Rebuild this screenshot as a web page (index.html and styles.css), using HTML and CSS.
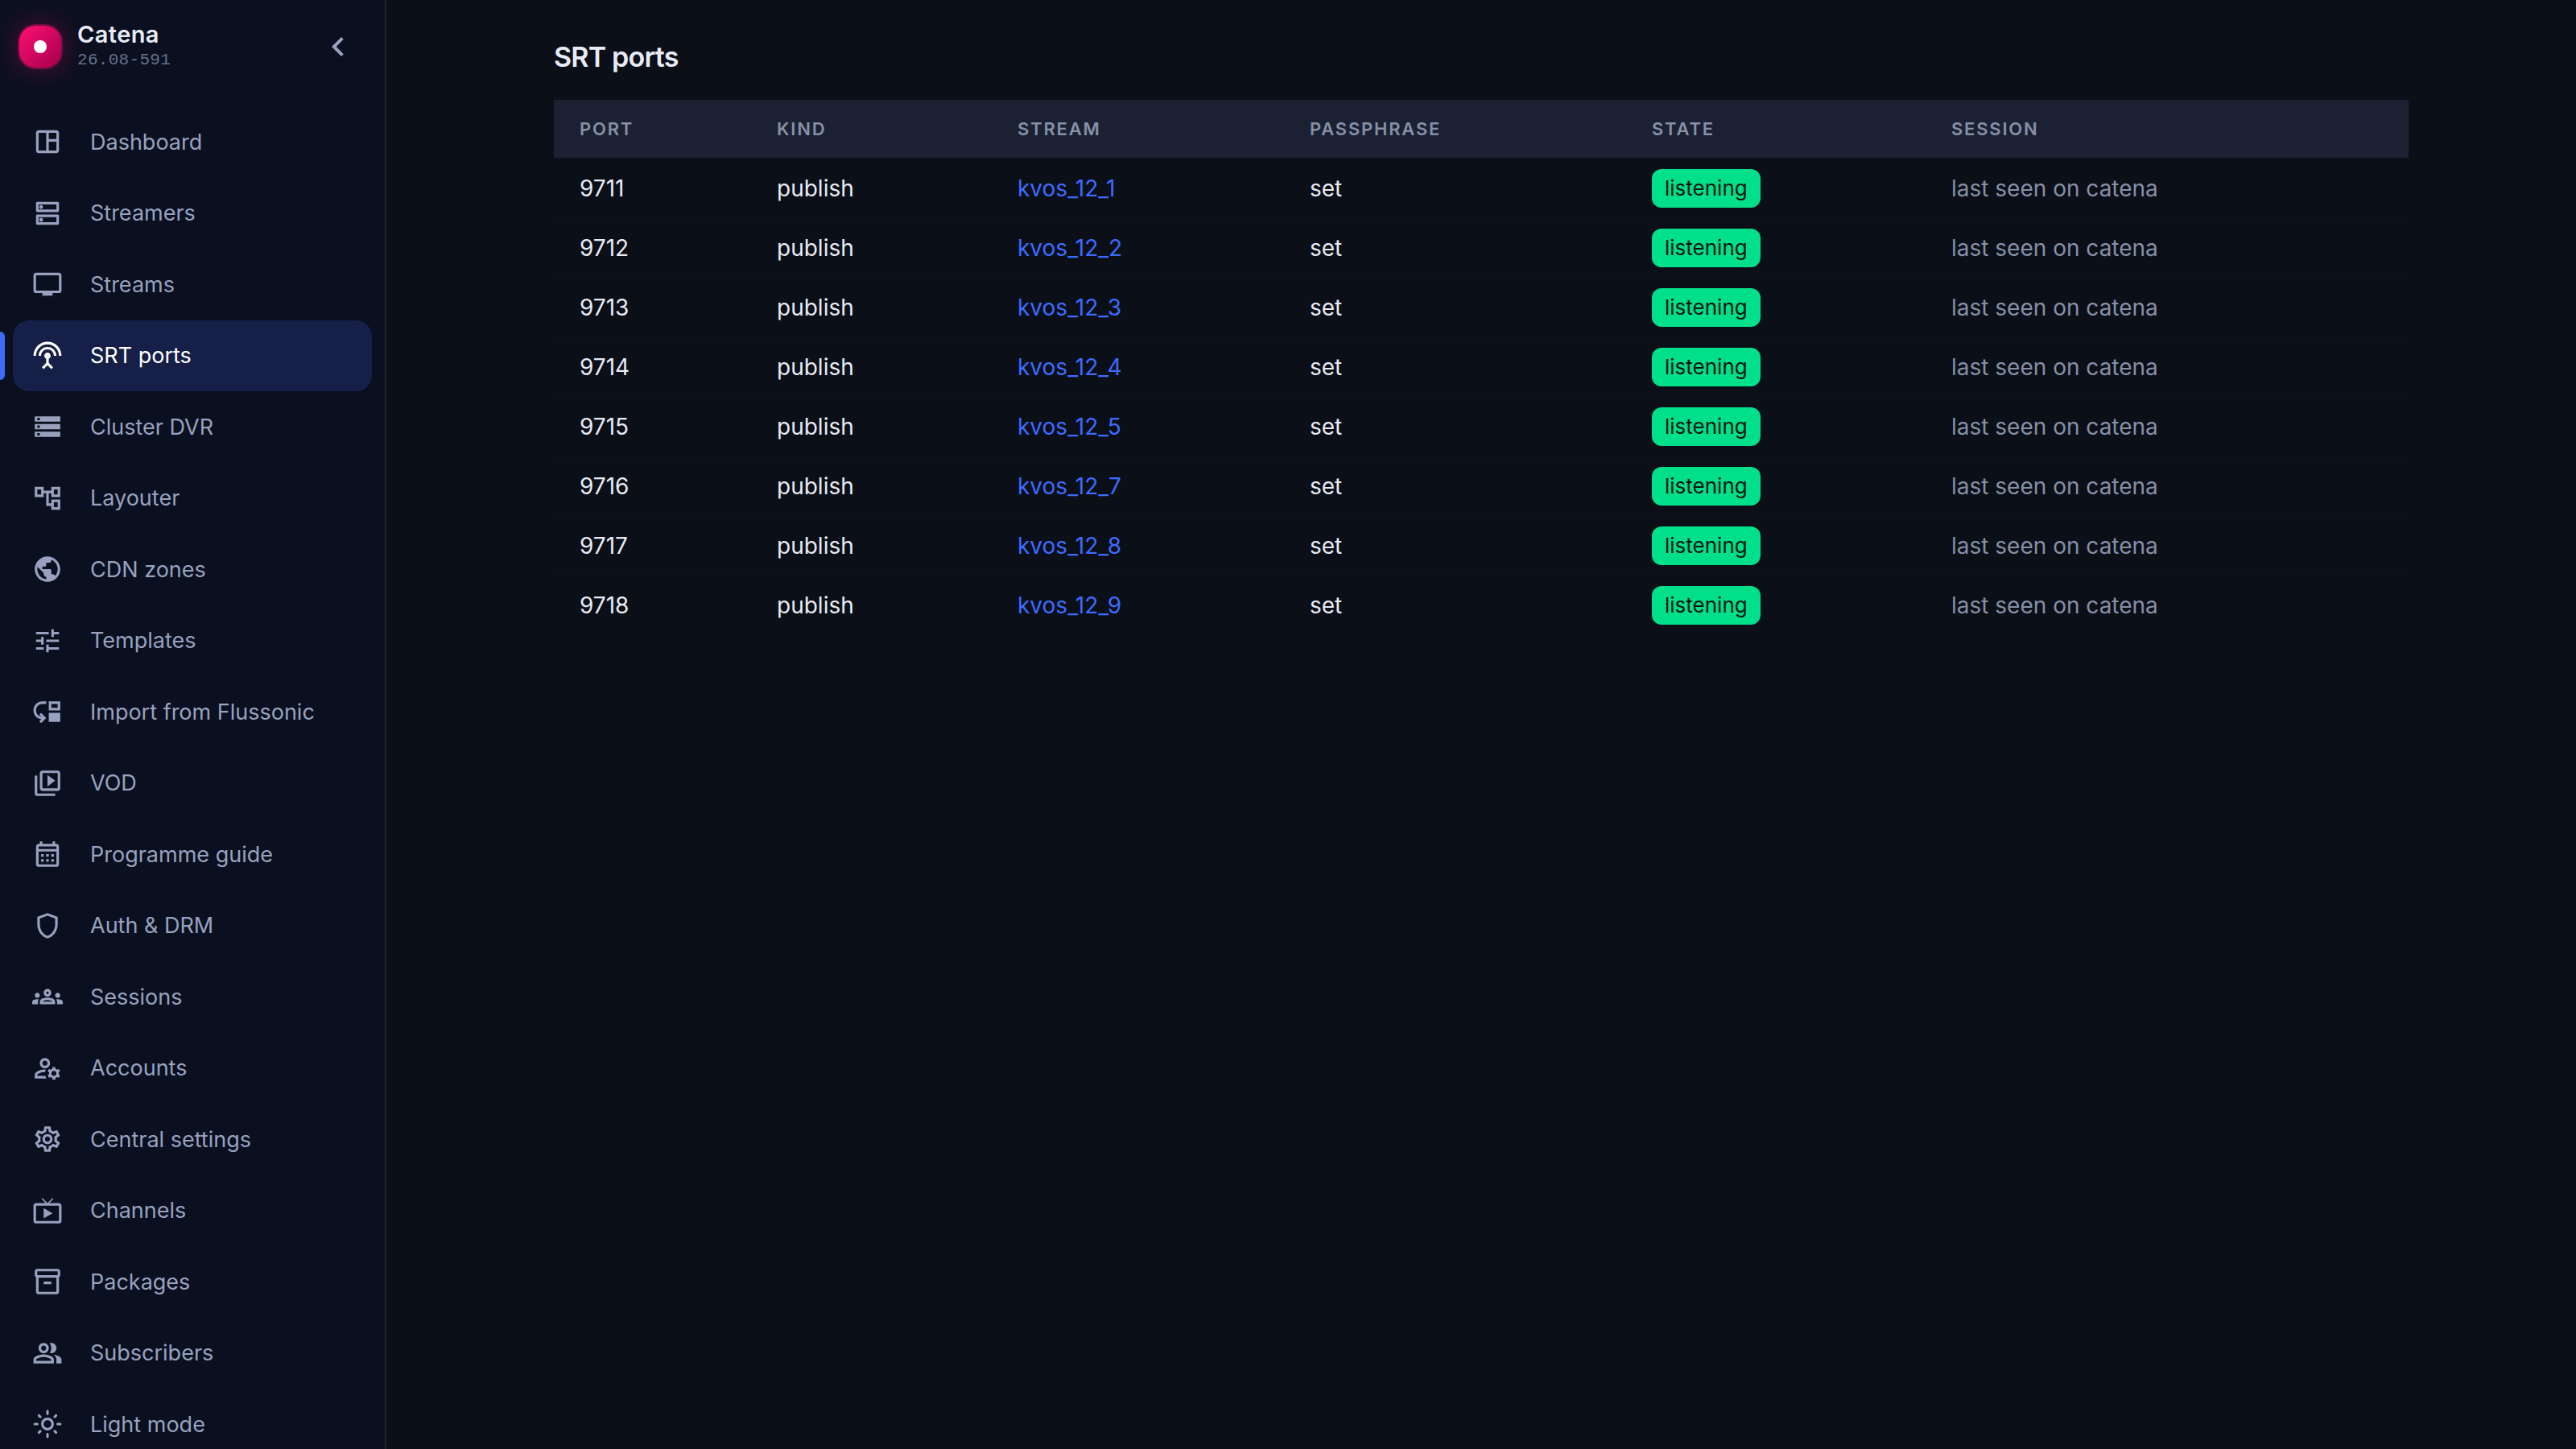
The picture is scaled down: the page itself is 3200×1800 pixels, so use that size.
FILE: index.html
```html
<!DOCTYPE html>
<html lang="en">
<head>
    <meta charset="UTF-8">
    <title>Catena - SRT ports</title>
    <link rel="stylesheet" href="styles.css">
</head>
<body>
    <aside class="sidebar">
        <div class="brand">
            <div class="logo"><span class="logo-dot"></span></div>
            <div class="brand-text">
                <div class="brand-name">Catena</div>
                <div class="brand-version">26.08-591</div>
            </div>
            <svg class="collapse" viewBox="0 0 24 24"><path d="M15.41 7.41L14 6l-6 6 6 6 1.41-1.41L10.83 12z"/></svg>
        </div>

        <nav class="nav">
            <a class="nav-item">
                <svg class="icon" viewBox="0 0 24 24"><path d="M19 3H5c-1.1 0-2 .9-2 2v14c0 1.1.9 2 2 2h14c1.1 0 2-.9 2-2V5c0-1.1-.9-2-2-2zM5 19V5h6v14H5zm14 0h-6v-7h6v7zm0-9h-6V5h6v5z"/></svg>
                <span>Dashboard</span>
            </a>
            <a class="nav-item">
                <svg class="icon" viewBox="0 0 24 24"><path d="M19 15v4H5v-4h14m1-2H4c-.55 0-1 .45-1 1v6c0 .55.45 1 1 1h16c.55 0 1-.45 1-1v-6c0-.55-.45-1-1-1zM7 18.5c-.82 0-1.5-.67-1.5-1.5s.68-1.5 1.5-1.5 1.5.67 1.5 1.5-.67 1.5-1.5 1.5zM19 5v4H5V5h14m1-2H4c-.55 0-1 .45-1 1v6c0 .55.45 1 1 1h16c.55 0 1-.45 1-1V4c0-.55-.45-1-1-1zM7 8.5c-.82 0-1.5-.67-1.5-1.5S6.18 5.5 7 5.5s1.5.68 1.5 1.5S7.83 8.5 7 8.5z"/></svg>
                <span>Streamers</span>
            </a>
            <a class="nav-item">
                <svg class="icon" viewBox="0 0 24 24"><path d="M21 3H3c-1.1 0-2 .9-2 2v12c0 1.1.9 2 2 2h5v2h8v-2h5c1.1 0 1.99-.9 1.99-2L23 5c0-1.1-.9-2-2-2zm0 14H3V5h18v12z"/></svg>
                <span>Streams</span>
            </a>
            <a class="nav-item active">
                <svg class="icon" viewBox="0 0 24 24"><path d="M12 5c-3.87 0-7 3.13-7 7h2c0-2.76 2.24-5 5-5s5 2.24 5 5h2c0-3.87-3.13-7-7-7zm1 9.29c.88-.39 1.5-1.26 1.5-2.29 0-1.38-1.12-2.5-2.5-2.5S9.5 10.62 9.5 12c0 1.02.62 1.9 1.5 2.29v3.3L7.59 21 9 22.41l3-3 3 3L16.41 21 13 17.59v-3.3zM12 1C5.93 1 1 5.93 1 12h2c0-4.97 4.03-9 9-9s9 4.03 9 9h2c0-6.07-4.93-11-11-11z"/></svg>
                <span>SRT ports</span>
            </a>
            <a class="nav-item">
                <svg class="icon" viewBox="0 0 24 24"><path d="M2 20h20v-4H2v4zm2-3h2v2H4v-2zM2 4v4h20V4H2zm4 3H4V5h2v2zm-4 7h20v-4H2v4zm2-3h2v2H4v-2z"/></svg>
                <span>Cluster DVR</span>
            </a>
            <a class="nav-item">
                <svg class="icon" viewBox="0 0 24 24"><path d="M22 11V3h-7v3H9V3H2v8h7V8h2v10h4v3h7v-8h-7v3h-2V8h2v3h7zM7 9H4V5h3v4zm10 6h3v4h-3v-4zm0-10h3v4h-3V5z"/></svg>
                <span>Layouter</span>
            </a>
            <a class="nav-item">
                <svg class="icon" viewBox="0 0 24 24"><path d="M12 2C6.48 2 2 6.48 2 12s4.48 10 10 10 10-4.48 10-10S17.52 2 12 2zm-1 17.93c-3.95-.49-7-3.85-7-7.93 0-.62.08-1.21.21-1.79L9 15v1c0 1.1.9 2 2 2v1.93zm6.9-2.54c-.26-.81-1-1.39-1.9-1.39h-1v-3c0-.55-.45-1-1-1H8v-2h2c.55 0 1-.45 1-1V7h2c1.1 0 2-.9 2-2v-.41c2.93 1.19 5 4.06 5 7.41 0 2.08-.8 3.97-2.1 5.39z"/></svg>
                <span>CDN zones</span>
            </a>
            <a class="nav-item">
                <svg class="icon" viewBox="0 0 24 24"><path d="M3 17v2h6v-2H3zM3 5v2h10V5H3zm10 16v-2h8v-2h-8v-2h-2v6h2zM7 9v2H3v2h4v2h2V9H7zm14 4v-2H11v2h10zm-6-4h2V7h4V5h-4V3h-2v6z"/></svg>
                <span>Templates</span>
            </a>
            <a class="nav-item">
                <svg class="icon" viewBox="0 0 24 24"><path d="M3 11c0 2.45 1.76 4.47 4.08 4.91l-1.49-1.49L7 13l4 4.01L7 21l-1.41-1.41 1.58-1.58v-.06C3.7 17.54 1 14.58 1 11c0-3.87 3.13-7 7-7h3v2H8c-2.76 0-5 2.24-5 5zM22 11V4h-9v7h9zm-2-2h-5V6h5v3zM13 13h9v7h-9z"/></svg>
                <span>Import from Flussonic</span>
            </a>
            <a class="nav-item">
                <svg class="icon" viewBox="0 0 24 24"><path d="M4 6H2v14c0 1.1.9 2 2 2h14v-2H4V6zm16-4H8c-1.1 0-2 .9-2 2v12c0 1.1.9 2 2 2h12c1.1 0 2-.9 2-2V4c0-1.1-.9-2-2-2zm0 14H8V4h12v12zM12 5.5v9l6-4.5z"/></svg>
                <span>VOD</span>
            </a>
            <a class="nav-item">
                <svg class="icon" viewBox="0 0 24 24"><path d="M19 4h-1V2h-2v2H8V2H6v2H5c-1.11 0-1.99.9-1.99 2L3 20c0 1.1.89 2 2 2h14c1.1 0 2-.9 2-2V6c0-1.1-.9-2-2-2zm0 16H5V10h14v10zm0-12H5V6h14v2zM9 14H7v-2h2v2zm4 0h-2v-2h2v2zm4 0h-2v-2h2v2zm-8 4H7v-2h2v2zm4 0h-2v-2h2v2zm4 0h-2v-2h2v2z"/></svg>
                <span>Programme guide</span>
            </a>
            <a class="nav-item">
                <svg class="icon" viewBox="0 0 24 24"><path d="M12 2L4 5v6.09c0 5.05 3.41 9.76 8 10.91 4.59-1.15 8-5.86 8-10.91V5l-8-3zm6 9.09c0 4-2.55 7.7-6 8.83-3.45-1.13-6-4.82-6-8.83v-4.7l6-2.25 6 2.25v4.7z"/></svg>
                <span>Auth &amp; DRM</span>
            </a>
            <a class="nav-item">
                <svg class="icon" viewBox="0 0 24 24"><path d="M4 13c1.1 0 2-.9 2-2s-.9-2-2-2-2 .9-2 2 .9 2 2 2zm1.13 1.1c-.37-.06-.74-.1-1.13-.1-.99 0-1.93.21-2.78.58C.48 14.9 0 15.62 0 16.43V18h4.5v-1.61c0-.83.23-1.61.63-2.29zM20 13c1.1 0 2-.9 2-2s-.9-2-2-2-2 .9-2 2 .9 2 2 2zm4 3.43c0-.81-.48-1.53-1.22-1.85-.85-.37-1.79-.58-2.78-.58-.39 0-.76.04-1.13.1.4.68.63 1.46.63 2.29V18H24v-1.57zm-7.76-2.78c-1.17-.52-2.61-.9-4.24-.9-1.63 0-3.07.39-4.24.9C6.68 14.13 6 15.21 6 16.39V18h12v-1.61c0-1.18-.68-2.26-1.76-2.74zM8.07 16c.09-.23.13-.39.91-.69.97-.38 1.99-.56 3.02-.56s2.05.18 3.02.56c.77.3.81.46.91.69H8.07zM12 8c.55 0 1 .45 1 1s-.45 1-1 1-1-.45-1-1 .45-1 1-1m0-2c-1.66 0-3 1.34-3 3s1.34 3 3 3 3-1.34 3-3-1.34-3-3-3z"/></svg>
                <span>Sessions</span>
            </a>
            <a class="nav-item">
                <svg class="icon" viewBox="0 0 24 24"><path d="M4 18v-.65c0-.34.16-.66.41-.81C6.1 15.53 8.03 15 10 15c.03 0 .05 0 .08.01.1-.7.3-1.37.59-1.98-.22-.02-.44-.03-.67-.03-2.42 0-4.68.67-6.61 1.82-.88.52-1.39 1.5-1.39 2.53V20h9.26c-.42-.6-.75-1.28-.97-2H4zM10 12c2.21 0 4-1.79 4-4s-1.79-4-4-4-4 1.79-4 4 1.79 4 4 4zm0-6c1.1 0 2 .9 2 2s-.9 2-2 2-2-.9-2-2 .9-2 2-2zM20.75 16c0-.22-.03-.42-.06-.63l1.14-1.01-1-1.73-1.45.49c-.32-.27-.68-.48-1.08-.63L18 11h-2l-.3 1.49c-.4.15-.76.36-1.08.63l-1.45-.49-1 1.73 1.14 1.01c-.03.21-.06.41-.06.63s.03.42.06.63l-1.14 1.01 1 1.73 1.45-.49c.32.27.68.48 1.08.63L16 21h2l.3-1.49c.4-.15.76-.36 1.08-.63l1.45.49 1-1.73-1.14-1.01c.03-.21.06-.41.06-.63zM17 18c-1.1 0-2-.9-2-2s.9-2 2-2 2 .9 2 2-.9 2-2 2z"/></svg>
                <span>Accounts</span>
            </a>
            <a class="nav-item">
                <svg class="icon" viewBox="0 0 24 24"><path d="M19.43 12.98c.04-.32.07-.64.07-.98 0-.34-.03-.66-.07-.98l2.11-1.65c.19-.15.24-.42.12-.64l-2-3.46c-.09-.16-.26-.25-.44-.25-.06 0-.12.01-.17.03l-2.49 1c-.52-.4-1.08-.73-1.69-.98l-.38-2.65C14.46 2.18 14.25 2 14 2h-4c-.25 0-.46.18-.49.42l-.38 2.65c-.61.25-1.17.59-1.69.98l-2.49-1c-.06-.02-.12-.03-.18-.03-.17 0-.34.09-.43.25l-2 3.46c-.13.22-.07.49.12.64l2.11 1.65c-.04.32-.07.65-.07.98 0 .33.03.66.07.98l-2.11 1.65c-.19.15-.24.42-.12.64l2 3.46c.09.16.26.25.44.25.06 0 .12-.01.17-.03l2.49-1c.52.4 1.08.73 1.69.98l.38 2.65c.03.24.24.42.49.42h4c.25 0 .46-.18.49-.42l.38-2.65c.61-.25 1.17-.59 1.69-.98l2.49 1c.06.02.12.03.18.03.17 0 .34-.09.43-.25l2-3.46c.12-.22.07-.49-.12-.64l-2.11-1.65zm-1.98-1.71c.04.31.05.52.05.73 0 .21-.02.43-.05.73l-.14 1.13.89.7 1.08.84-.7 1.21-1.27-.51-1.04-.42-.9.68c-.43.32-.84.56-1.25.73l-1.06.43-.16 1.13-.2 1.35h-1.4l-.19-1.35-.16-1.13-1.06-.43c-.43-.18-.83-.41-1.23-.71l-.91-.7-1.06.43-1.27.51-.7-1.21 1.08-.84.89-.7-.14-1.13c-.03-.31-.05-.54-.05-.74s.02-.43.05-.73l.14-1.13-.89-.7-1.08-.84.7-1.21 1.27.51 1.04.42.9-.68c.43-.32.84-.56 1.25-.73l1.06-.43.16-1.13.2-1.35h1.39l.19 1.35.16 1.13 1.06.43c.43.18.83.41 1.23.71l.91.7 1.06-.43 1.27-.51.7 1.21-1.07.85-.89.7.14 1.13zM12 8c-2.21 0-4 1.79-4 4s1.79 4 4 4 4-1.79 4-4-1.79-4-4-4zm0 6c-1.1 0-2-.9-2-2s.9-2 2-2 2 .9 2 2-.9 2-2 2z"/></svg>
                <span>Central settings</span>
            </a>
            <a class="nav-item">
                <svg class="icon" viewBox="0 0 24 24"><path d="M21 6h-7.59l3.29-3.29L16 2l-4 4-4-4-.7.71L10.59 6H3c-1.1 0-2 .89-2 2v12c0 1.1.9 2 2 2h18c1.1 0 2-.9 2-2V8c0-1.11-.9-2-2-2zm0 14H3V8h18v12zM9 10v8l7-4z"/></svg>
                <span>Channels</span>
            </a>
            <a class="nav-item">
                <svg class="icon" viewBox="0 0 24 24"><path d="M20 2H4c-1 0-2 .9-2 2v3.01c0 .72.43 1.34 1 1.69V20c0 1.1 1.1 2 2 2h14c.9 0 2-.9 2-2V8.7c.57-.35 1-.97 1-1.69V4c0-1.1-1-2-2-2zm-1 18H5V9h14v11zm1-13H4V4h16v3zM9 12h6v2H9z"/></svg>
                <span>Packages</span>
            </a>
            <a class="nav-item">
                <svg class="icon" viewBox="0 0 24 24"><path d="M16.67 13.13C18.04 14.06 19 15.32 19 17v3h4v-3c0-2.18-3.57-3.47-6.33-3.87zM15 12c2.21 0 4-1.79 4-4s-1.79-4-4-4c-.47 0-.91.1-1.33.24C14.5 5.27 15 6.58 15 8s-.5 2.73-1.33 3.76c.42.14.86.24 1.33.24zM9 12c2.21 0 4-1.79 4-4s-1.79-4-4-4-4 1.79-4 4 1.79 4 4 4zm0-6c1.1 0 2 .9 2 2s-.9 2-2 2-2-.9-2-2 .9-2 2-2zM9 13c-2.67 0-8 1.34-8 4v3h16v-3c0-2.66-5.33-4-8-4zm6 5H3v-.99C3.2 16.29 6.3 15 9 15s5.8 1.29 6 2v1z"/></svg>
                <span>Subscribers</span>
            </a>
            <a class="nav-item">
                <svg class="icon" viewBox="0 0 24 24"><path d="M12 9c1.65 0 3 1.35 3 3s-1.35 3-3 3-3-1.35-3-3 1.35-3 3-3m0-2c-2.76 0-5 2.24-5 5s2.24 5 5 5 5-2.24 5-5-2.24-5-5-5zM2 13h2c.55 0 1-.45 1-1s-.45-1-1-1H2c-.55 0-1 .45-1 1s.45 1 1 1zm18 0h2c.55 0 1-.45 1-1s-.45-1-1-1h-2c-.55 0-1 .45-1 1s.45 1 1 1zM11 2v2c0 .55.45 1 1 1s1-.45 1-1V2c0-.55-.45-1-1-1s-1 .45-1 1zm0 18v2c0 .55.45 1 1 1s1-.45 1-1v-2c0-.55-.45-1-1-1s-1 .45-1 1zM5.99 4.58c-.39-.39-1.03-.39-1.41 0-.39.39-.39 1.03 0 1.41l1.06 1.06c.39.39 1.03.39 1.41 0s.39-1.03 0-1.41L5.99 4.58zm12.37 12.37c-.39-.39-1.03-.39-1.41 0-.39.39-.39 1.03 0 1.41l1.06 1.06c.39.39 1.03.39 1.41 0 .39-.39.39-1.03 0-1.41l-1.06-1.06zm1.06-10.96c.39-.39.39-1.03 0-1.41-.39-.39-1.03-.39-1.41 0l-1.06 1.06c-.39.39-.39 1.03 0 1.41s1.03.39 1.41 0l1.06-1.06zM7.05 18.36c.39-.39.39-1.03 0-1.41-.39-.39-1.03-.39-1.41 0l-1.06 1.06c-.39.39-.39 1.03 0 1.41s1.03.39 1.41 0l1.06-1.06z"/></svg>
                <span>Light mode</span>
            </a>
        </nav>
    </aside>

    <main class="content">
        <h1 class="title">SRT ports</h1>
        <table class="ports">
            <colgroup>
                <col class="col-port">
                <col class="col-kind">
                <col class="col-stream">
                <col class="col-pass">
                <col class="col-state">
                <col>
            </colgroup>
            <thead>
                <tr><th>Port</th><th>Kind</th><th>Stream</th><th>Passphrase</th><th>State</th><th>Session</th></tr>
            </thead>
            <tbody>
                <tr><td>9711</td><td>publish</td><td><a class="link">kvos_12_1</a></td><td>set</td><td><span class="badge">listening</span></td><td class="muted">last seen on catena</td></tr>
                <tr><td>9712</td><td>publish</td><td><a class="link">kvos_12_2</a></td><td>set</td><td><span class="badge">listening</span></td><td class="muted">last seen on catena</td></tr>
                <tr><td>9713</td><td>publish</td><td><a class="link">kvos_12_3</a></td><td>set</td><td><span class="badge">listening</span></td><td class="muted">last seen on catena</td></tr>
                <tr><td>9714</td><td>publish</td><td><a class="link">kvos_12_4</a></td><td>set</td><td><span class="badge">listening</span></td><td class="muted">last seen on catena</td></tr>
                <tr><td>9715</td><td>publish</td><td><a class="link">kvos_12_5</a></td><td>set</td><td><span class="badge">listening</span></td><td class="muted">last seen on catena</td></tr>
                <tr><td>9716</td><td>publish</td><td><a class="link">kvos_12_7</a></td><td>set</td><td><span class="badge">listening</span></td><td class="muted">last seen on catena</td></tr>
                <tr><td>9717</td><td>publish</td><td><a class="link">kvos_12_8</a></td><td>set</td><td><span class="badge">listening</span></td><td class="muted">last seen on catena</td></tr>
                <tr><td>9718</td><td>publish</td><td><a class="link">kvos_12_9</a></td><td>set</td><td><span class="badge">listening</span></td><td class="muted">last seen on catena</td></tr>
            </tbody>
        </table>
    </main>
</body>
</html>
```

FILE: styles.css
```css
* {
    box-sizing: border-box;
}
body {
    margin: 0;
    display: flex;
    height: 100vh;
    overflow: hidden;
    background: #0a0f18;
    color: #e8ebf5;
    font-family: Inter, "Liberation Sans", sans-serif;
    font-size: 28px;
}

/* Sidebar */
.sidebar {
    width: 480px;
    height: 100vh;
    flex-shrink: 0;
    overflow: hidden;
    background: #0a101f;
    border-right: 2px solid #1e2232;
}
.brand {
    display: flex;
    align-items: center;
    height: 116px;
    padding: 0 34px 0 24px;
    margin-bottom: 16px;
}
.logo {
    width: 52px;
    height: 52px;
    border-radius: 20px;
    display: flex;
    align-items: center;
    justify-content: center;
    background: linear-gradient(135deg, #ff0f73, #a3004b);
    box-shadow: 0 0 0 2px rgba(255, 15, 115, 0.35), 0 0 36px rgba(255, 15, 115, 0.35);
}
.logo-dot {
    width: 16px;
    height: 16px;
    border-radius: 50%;
    background: #fff;
}
.brand-text {
    flex: 1;
    margin-left: 20px;
}
.brand-name {
    font-size: 29px;
    font-weight: 600;
    line-height: 34px;
    letter-spacing: 0.4px;
}
.brand-version {
    font-family: "Liberation Mono", monospace;
    font-size: 21px;
    line-height: 30px;
    letter-spacing: 0.3px;
    color: #66708c;
}
.collapse {
    width: 48px;
    height: 48px;
    fill: #98a2bf;
}
.nav-item {
    position: relative;
    display: flex;
    align-items: center;
    height: 88.5px;
    margin: 0 16px;
    padding-left: 24px;
    border-radius: 20px;
    font-size: 27px;
    color: #98a2bf;
}
.icon {
    width: 38px;
    height: 38px;
    margin-right: 34px;
    fill: currentColor;
}
.active {
    background: #151f47;
    color: #fff;
}
.active::before {
    content: "";
    position: absolute;
    left: -16px;
    top: 14px;
    width: 6px;
    height: 60px;
    border-radius: 0 6px 6px 0;
    background: #3d6bff;
}

/* Ports table */
.content {
    width: 2304px;
    margin: 0 auto;
    padding-top: 49px;
}
.title {
    margin: 0 0 31px;
    font-size: 34px;
    font-weight: 600;
    line-height: 44px;
    letter-spacing: -0.8px;
}
.ports {
    width: 100%;
    table-layout: fixed;
    border-spacing: 0;
}
.col-port { width: 245px; }
.col-kind { width: 299px; }
.col-stream { width: 363px; }
.col-pass { width: 425px; }
.col-state { width: 372px; }
.ports th {
    height: 72px;
    padding: 0 32px;
    background: #1b2133;
    color: #8690a6;
    font-size: 22px;
    font-weight: 600;
    letter-spacing: 1.8px;
    text-align: left;
    text-transform: uppercase;
}
.ports td {
    height: 74px;
    padding: 0 32px;
    border-top: 2px solid #0c1017;
}
.ports .link {
    color: #3d6bff;
}
.ports .muted {
    color: #8690a6;
}
.badge {
    display: inline-block;
    padding: 0 16px;
    border-radius: 12px;
    background: #00e08a;
    color: #04150e;
    font-size: 26px;
    line-height: 48px;
    vertical-align: middle;
}
```
